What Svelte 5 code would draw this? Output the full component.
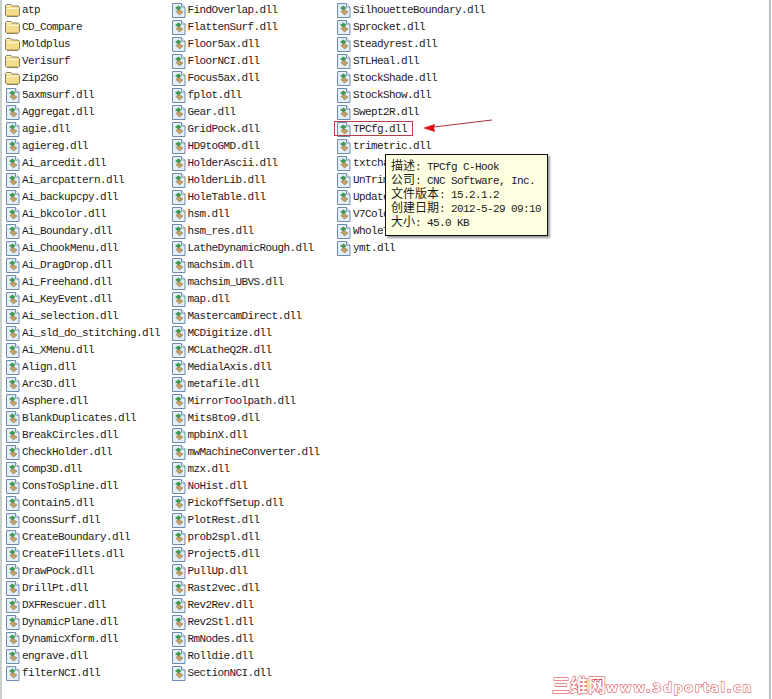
<script>
  const columns = [
    ["atp", "CD_Compare", "Moldplus", "Verisurf", "Zip2Go", "5axmsurf.dll", "Aggregat.dll", "agie.dll", "agiereg.dll", "Ai_arcedit.dll", "Ai_arcpattern.dll", "Ai_backupcpy.dll", "Ai_bkcolor.dll", "Ai_Boundary.dll", "Ai_ChookMenu.dll", "Ai_DragDrop.dll", "Ai_Freehand.dll", "Ai_KeyEvent.dll", "Ai_selection.dll", "Ai_sld_do_stitching.dll", "Ai_XMenu.dll", "Align.dll", "Arc3D.dll", "Asphere.dll", "BlankDuplicates.dll", "BreakCircles.dll", "CheckHolder.dll", "Comp3D.dll", "ConsToSpline.dll", "Contain5.dll", "CoonsSurf.dll", "CreateBoundary.dll", "CreateFillets.dll", "DrawPock.dll", "DrillPt.dll", "DXFRescuer.dll", "DynamicPlane.dll", "DynamicXform.dll", "engrave.dll", "filterNCI.dll"],
    ["FindOverlap.dll", "FlattenSurf.dll", "Floor5ax.dll", "FloorNCI.dll", "Focus5ax.dll", "fplot.dll", "Gear.dll", "GridPock.dll", "HD9toGMD.dll", "HolderAscii.dll", "HolderLib.dll", "HoleTable.dll", "hsm.dll", "hsm_res.dll", "LatheDynamicRough.dll", "machsim.dll", "machsim_UBVS.dll", "map.dll", "MastercamDirect.dll", "MCDigitize.dll", "MCLatheQ2R.dll", "MedialAxis.dll", "metafile.dll", "MirrorToolpath.dll", "Mits8to9.dll", "mpbinX.dll", "mwMachineConverter.dll", "mzx.dll", "NoHist.dll", "PickoffSetup.dll", "PlotRest.dll", "prob2spl.dll", "Project5.dll", "PullUp.dll", "Rast2vec.dll", "Rev2Rev.dll", "Rev2Stl.dll", "RmNodes.dll", "Rolldie.dll", "SectionNCI.dll"],
    ["SilhouetteBoundary.dll", "Sprocket.dll", "Steadyrest.dll", "STLHeal.dll", "StockShade.dll", "StockShow.dll", "Swept2R.dll", "TPCfg.dll", "trimetric.dll", "txtchain.dll", "UnTrim.dll", "Update.dll", "V7Color.dll", "WholeTool.dll", "ymt.dll"],
  ];

  const tooltip = [
    ["描述", "TPCfg C-Hook"],
    ["公司", "CNC Software, Inc."],
    ["文件版本", "15.2.1.2"],
    ["创建日期", "2012-5-29 09:10"],
    ["大小", "45.0 KB"],
  ];

  const isFolder = name => !name.endsWith(".dll");
</script>

{#snippet folderIcon()}
  <svg class="icon" width="16" height="16" viewBox="0 0 16 16">
    <path d="M0.5 13V3.5L1.5 2.5H6L7.5 4H13L14.5 5.5V13L13 14.5H2Z" fill="#f4dc8c" stroke="#85806a" />
    <path d="M1.5 6.5H13.5" stroke="#fff8d8" fill="none" />
    <path d="M1.5 3.5H6" stroke="#fff3c4" fill="none" />
    <path d="M1.5 13.5H13.5" stroke="#d9b95e" fill="none" />
  </svg>
{/snippet}

{#snippet dllIcon()}
  <svg class="icon" width="16" height="16" viewBox="0 0 16 16">
    <path d="M1.5 1.5H10.5L14 5V15.5H1.5Z" fill="#e6eef7" stroke="#6d8db0" />
    <path d="M10.5 1.5V5H14" fill="#fff" stroke="#6d8db0" />
    <path d="M4 6L7.5 3.5L10.5 6L7.5 8.5Z" fill="#3f9a52" />
    <path d="M5 9.5L8 7.5L12 10L8.5 13Z" fill="#c4a364" stroke="#75633a" stroke-width="0.5" />
  </svg>
{/snippet}

<div class="window">
  <div class="list">
    {#each columns as column}
      <div class="column">
        {#each column as name}
          <div class="row" class:marked={name === "TPCfg.dll"}>
            {#if isFolder(name)}
              {@render folderIcon()}
            {:else}
              {@render dllIcon()}
            {/if}
            <span class="name">{name}</span>
          </div>
        {/each}
      </div>
    {/each}
  </div>

  <svg class="arrow" width="76" height="20" viewBox="0 0 76 20">
    <path d="M14 11L72 4" stroke="#a8323f" stroke-width="1" fill="none" />
    <path d="M3 12L15 8L14 12L15 16Z" fill="#e0101c" />
  </svg>

  <div class="tooltip">
    {#each tooltip as [label, value]}
      <div class="tip-line"><span class="cjk">{label}</span>: {value}</div>
    {/each}
  </div>

  <div class="watermark">三维网<span class="site">www.3dportal.cn</span></div>
</div>

<style>
  :global(body) {
    margin: 0;
    background: #fff;
  }

  .window {
    position: relative;
    width: 771px;
    height: 699px;
    box-sizing: border-box;
    border-left: 2px solid #c9d0ca;
    border-right: 2px solid #b9c4bd;
    background: #fff;
    overflow: hidden;
    font-family: "Liberation Mono", "Noto Sans CJK SC", monospace;
    font-size: 11px;
    letter-spacing: -0.6px;
    color: #1a1a1a;
  }

  .list {
    display: flex;
    padding: 1px 0 0 3px;
  }

  .column {
    width: 165.5px;
    flex: none;
  }

  .row {
    position: relative;
    display: flex;
    align-items: center;
    width: fit-content;
    height: 17px;
  }

  .marked::after {
    content: "";
    position: absolute;
    left: -2px;
    right: -6px;
    top: 1px;
    bottom: 1px;
    border: 1px solid #b5404a;
  }

  .icon {
    flex: none;
  }

  .name {
    padding-left: 1px;
    white-space: nowrap;
  }

  .arrow {
    position: absolute;
    left: 418px;
    top: 116px;
  }

  .tooltip {
    position: absolute;
    left: 383px;
    top: 154px;
    width: 163px;
    height: 82px;
    box-sizing: border-box;
    padding: 3px 0 0 5px;
    background: #ffffe1;
    border: 1px solid #111;
    box-shadow: 2px 2px 2px rgba(0, 0, 0, 0.4);
    line-height: 14px;
    white-space: nowrap;
  }

  .tip-line {
    height: 14px;
  }

  .cjk {
    font-family: "Noto Sans CJK SC", sans-serif;
    font-size: 12px;
    letter-spacing: 0;
  }

  .watermark {
    position: absolute;
    left: 550px;
    top: 673px;
    width: 210px;
    font-family: "Noto Sans CJK SC", sans-serif;
    font-size: 18px;
    line-height: 22px;
    font-weight: 700;
    letter-spacing: 0;
    white-space: nowrap;
    color: #fff;
    -webkit-text-stroke: 1px #e0303c;
    paint-order: stroke fill;
  }

  .site {
    font-family: "DejaVu Sans", sans-serif;
    font-size: 13px;
    letter-spacing: 1.5px;
  }
</style>
